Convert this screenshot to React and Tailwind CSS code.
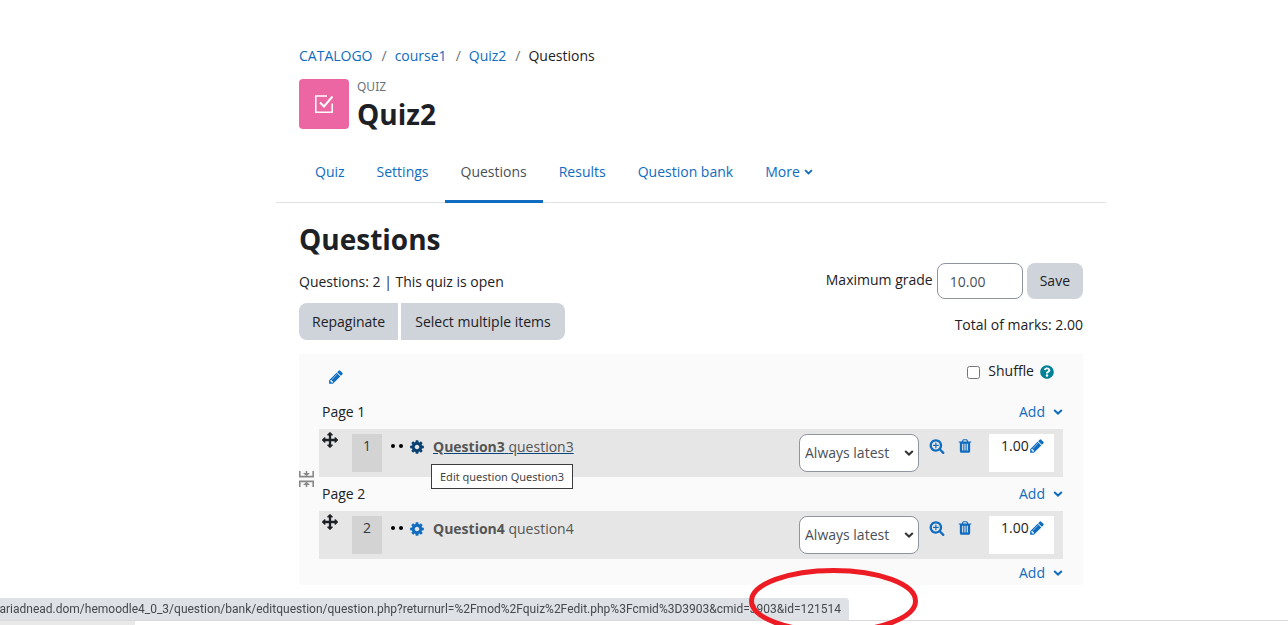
import { useState } from "react";
import { FaQuestionCircle } from "react-icons/fa";

const ICONS = {
  pencil:
    "M491 1536l91-91-235-235-91 91v107h128v128h107zm523-928q0-22-22-22-10 0-17 7l-542 542q-7 7-7 17 0 22 22 22 10 0 17-7l542-542q7-7 7-17zm-54-192l416 416-832 832h-416v-416zm683 96q0 53-37 90l-166 166-416-416 166-165q36-38 90-38 53 0 91 38l235 234q37 39 37 91z",
  cog: "M1152 896q0-106-75-181t-181-75-181 75-75 181 75 181 181 75 181-75 75-181zm512-109v222q0 12-8 23t-20 13l-185 28q-19 54-39 91 35 50 107 138 10 12 10 25t-9 23q-27 37-99 108t-94 71q-12 0-26-9l-138-108q-44 23-91 38-16 136-29 186-7 28-36 28h-222q-14 0-24.5-8.5t-11.5-21.5l-28-184q-49-16-90-37l-141 107q-10 9-25 9-14 0-25-11-126-114-165-168-7-10-7-23 0-12 8-23 15-21 51-66.5t54-70.5q-27-50-41-99l-183-27q-13-2-21-12.5t-8-23.5v-222q0-12 8-23t19-13l186-28q14-46 39-92-40-57-107-138-10-12-10-24 0-10 9-23 26-36 98.5-107.5t94.5-71.5q13 0 26 10l138 107q44-23 91-38 16-136 29-186 7-28 36-28h222q14 0 24.5 8.5t11.5 21.5l28 184q49 16 90 37l142-107q9-9 24-9 13 0 25 10 129 119 165 170 7 8 7 22 0 12-8 23-15 21-51 66.5t-54 70.5q26 50 41 98l183 28q13 2 21 12.5t8 23.5z",
  trash:
    "M704 1376v-704q0-14-9-23t-23-9h-64q-14 0-23 9t-9 23v704q0 14 9 23t23 9h64q14 0 23-9t9-23zm256 0v-704q0-14-9-23t-23-9h-64q-14 0-23 9t-9 23v704q0 14 9 23t23 9h64q14 0 23-9t9-23zm256 0v-704q0-14-9-23t-23-9h-64q-14 0-23 9t-9 23v704q0 14 9 23t23 9h64q14 0 23-9t9-23zm-544-992h448l-48-117q-7-9-17-11h-317q-10 2-17 11zm928 32v64q0 14-9 23t-23 9h-96v948q0 83-47 143.5t-113 60.5h-832q-66 0-113-58.5t-47-141.5v-952h-96q-14 0-23-9t-9-23v-64q0-14 9-23t23-9h309l70-167q15-37 54-63t79-26h320q40 0 79 26t54 63l70 167h309q14 0 23 9t9 23z",
  zoom: "M1088 800v64q0 13-9.5 22.5t-22.5 9.5h-224v224q0 13-9.5 22.5t-22.5 9.5h-64q-13 0-22.5-9.5t-9.5-22.5v-224h-224q-13 0-22.5-9.5t-9.5-22.5v-64q0-13 9.5-22.5t22.5-9.5h224v-224q0-13 9.5-22.5t22.5-9.5h64q13 0 22.5 9.5t9.5 22.5v224h224q13 0 22.5 9.5t9.5 22.5zm128 32q0-185-131.5-316.5t-316.5-131.5-316.5 131.5-131.5 316.5 131.5 316.5 316.5 131.5 316.5-131.5 131.5-316.5zm512 832q0 53-37.5 90.5t-90.5 37.5q-54 0-90-38l-343-342q-179 124-399 124-143 0-273.5-55.5t-225-150-150-225-55.5-273.5 55.5-273.5 150-225 225-150 273.5-55.5 273.5 55.5 225 150 150 225 55.5 273.5q0 220-124 399l343 343q37 37 37 90z",
  move: "M1792 896q0 26-19 45l-256 256q-19 19-45 19t-45-19-19-45v-128h-384v384h128q26 0 45 19t19 45-19 45l-256 256q-19 19-45 19t-45-19l-256-256q-19-19-19-45t19-45 45-19h128v-384h-384v128q0 26-19 45t-45 19-45-19l-256-256q-19-19-19-45t19-45l256-256q19-19 45-19t45 19 19 45v128h384v-384h-128q-26 0-45-19t-19-45 19-45l256-256q19-19 45-19t45 19l256 256q19 19 19 45t-19 45-45 19h-128v384h384v-128q0-26 19-45t45-19 45 19l256 256q19 19 19 45z",
};

function Icon({ name, className }) {
  return (
    <svg viewBox="0 0 1792 1792" fill="currentColor" className={className} aria-hidden="true">
      <path d={ICONS[name]} />
    </svg>
  );
}

function Chevron({ className }) {
  return (
    <svg viewBox="0 0 10 8" className={className} fill="none" stroke="currentColor" strokeWidth="2" aria-hidden="true">
      <path d="M1.2 2l3.8 3.6L8.8 2" />
    </svg>
  );
}

const crumbs = ["CATALOGO", "course1", "Quiz2"];
const tabs = ["Quiz", "Settings", "Questions", "Results", "Question bank"];
const questions = [
  { id: 1, name: "Question3", text: "question3", hovered: true },
  { id: 2, name: "Question4", text: "question4", hovered: false },
];

function AddMenu() {
  return (
    <button className="flex items-center gap-2 text-[#0f6cbf]">
      Add
      <Chevron className="w-[10px] h-2" />
    </button>
  );
}

function QuestionRow({ question }) {
  return (
    <div className="relative flex items-start bg-[#e6e6e6] pl-[3px] pr-[9px] py-[5px]">
      <button aria-label="Move" className="w-[30px] text-[#1d2125]">
        <Icon name="move" className="size-4 -mt-0.5" />
      </button>
      <span className="w-[30px] h-[38px] bg-[#d3d3d3] text-center text-[#343a40] leading-6">{question.id}</span>
      <svg viewBox="0 0 12 4" className="w-3 h-1 ml-[9px] mt-[10px]" aria-hidden="true">
        <circle cx="2" cy="2" r="2" />
        <circle cx="10" cy="2" r="2" />
      </svg>
      <a
        href="#question"
        className={
          question.hovered
            ? "flex items-center ml-[6px] mt-px leading-6 text-[#555] underline decoration-[#0a4780]"
            : "flex items-center ml-[6px] mt-px leading-6 text-[#555]"
        }
      >
        <Icon name="cog" className={question.hovered ? "size-4 text-[#094173]" : "size-4 text-[#0f6cbf]"} />
        <span className="ml-2 whitespace-pre">
          <b>{question.name}</b> {question.text}
        </span>
      </a>

      <div className="relative ml-auto w-[120px]">
        <select
          aria-label="Question version"
          className="appearance-none w-full h-[38px] bg-white border border-[#8f959e] rounded-lg pl-[5px] text-[#495057]"
        >
          <option>Always latest</option>
        </select>
        <Chevron className="absolute right-[5px] top-[15px] w-[10px] h-2 text-[#333] pointer-events-none" />
      </div>
      <button aria-label="Preview question" className="ml-[10px] mt-1 text-[#0f6cbf]">
        <Icon name="zoom" className="size-4" />
      </button>
      <button aria-label="Delete" className="ml-3 mt-1 text-[#0f6cbf]">
        <Icon name="trash" className="size-4" />
      </button>
      <div className="flex items-start w-[65px] h-[38px] ml-4 pl-3 bg-white leading-6">
        1.00
        <button aria-label="Edit maximum mark" className="mt-1 text-[#0f6cbf]">
          <Icon name="pencil" className="size-4" />
        </button>
      </div>

      {question.hovered && (
        <div
          role="tooltip"
          className="absolute left-28 top-[35px] z-10 h-[25px] px-2 bg-white border border-[#3c3c3c] font-['Noto_Sans',sans-serif] text-[11px] leading-[23px] text-[#444] whitespace-nowrap"
        >
          Edit question Question3
        </div>
      )}
    </div>
  );
}

export default function App() {
  const [grade, setGrade] = useState("10.00");
  const [shuffle, setShuffle] = useState(false);

  return (
    <div className="min-h-screen bg-white text-[#1d2125] text-[14px] leading-6 font-['Open_Sans','Noto_Sans',sans-serif]">
      <main className="pl-[276px] pr-[182px] pt-11">
        <header className="px-[23px]">
          <nav className="flex">
            {crumbs.map((crumb) => (
              <span key={crumb} className="flex">
                <a href="#crumb" className="text-[#0f6cbf]">{crumb}</a>
                <span className="pl-[9px] pr-2 text-[#6a737b]">/</span>
              </span>
            ))}
            <span>Questions</span>
          </nav>

          <div className="flex gap-2 mt-[11px]">
            <div className="flex items-center justify-center size-[50px] rounded bg-[#eb66a2]">
              <svg viewBox="0 0 18 18" className="size-[18px]" fill="none" stroke="white" strokeWidth="1.5" aria-hidden="true">
                <path d="M12 1H0.8v16.2h16.4V8.5" />
                <path d="M5 7.5l4 4L17.5 1.5" strokeWidth="2" />
              </svg>
            </div>
            <div>
              <div className="font-['Noto_Sans',sans-serif] text-[12px] leading-4 text-[#6a737b]">QUIZ</div>
              <h1 className="text-[28px] leading-[38px] font-bold">Quiz2</h1>
            </div>
          </div>
        </header>

        <nav className="flex px-[23px] mt-[11px] border-b border-[#dee2e6]">
          {tabs.map((tab) => (
            <a
              key={tab}
              href="#tab"
              className={
                tab === "Questions"
                  ? "px-4 pt-4 pb-4 -mb-px border-b-3 border-[#0f6cbf] text-[#495057]"
                  : "px-4 pt-4 text-[#0f6cbf]"
              }
            >
              {tab}
            </a>
          ))}
          <button className="flex items-center gap-1 self-start px-4 pt-4 text-[#0f6cbf]">
            More
            <Chevron className="w-[9px] h-2" />
          </button>
        </nav>

        <section className="px-[23px] pt-4">
          <h2 className="text-[28px] leading-10 font-bold">Questions</h2>

          <div className="flex justify-between mt-1">
            <div>
              <p className="pt-[7px]">Questions: 2 | This quiz is open</p>
              <div className="flex gap-[3px] mt-[9px]">
                <button className="h-[37px] px-[13px] bg-[#ced4da] rounded-l-lg">Repaginate</button>
                <button className="h-[37px] px-[14px] bg-[#ced4da] rounded-r-lg">Select multiple items</button>
              </div>
            </div>
            <div className="flex flex-col items-end">
              <form className="flex gap-1" onSubmit={(e) => e.preventDefault()}>
                <label htmlFor="maxgrade" className="pt-[5px]">Maximum grade</label>
                <input
                  id="maxgrade"
                  type="text"
                  value={grade}
                  onChange={(e) => setGrade(e.target.value)}
                  className="w-[86px] h-9 px-3 bg-white border border-[#8f959e] rounded-lg text-[#495057]"
                />
                <button className="h-9 px-[13px] bg-[#ced4da] rounded-lg">Save</button>
              </form>
              <p className="mt-[14px]">Total of marks: 2.00</p>
            </div>
          </div>

          <div className="relative mt-[14px] px-5 bg-[#fafafa]">
            <div className="flex items-start justify-between h-[41px] pl-[9px] pr-[9px] pt-[5px]">
              <button aria-label="Edit section heading" className="mt-[10px] text-[#0f6cbf]">
                <Icon name="pencil" className="size-4" />
              </button>
              <div className="flex items-center">
                <input
                  id="shuffle"
                  type="checkbox"
                  checked={shuffle}
                  onChange={(e) => setShuffle(e.target.checked)}
                  className="size-[13px] mt-0.5"
                />
                <label htmlFor="shuffle" className="ml-2">Shuffle</label>
                <button aria-label="Help with shuffle" className="ml-[6px] mt-0.5 text-[#008196]">
                  <FaQuestionCircle className="size-[14px]" />
                </button>
              </div>
            </div>

            {questions.map((question) => (
              <div key={question.id}>
                <div className="flex items-center justify-between h-[34px] pl-[3px]">
                  <span>Page {question.id}</span>
                  <AddMenu />
                </div>
                <QuestionRow question={question} />
              </div>
            ))}

            <div className="flex justify-end h-[26px] pt-0.5">
              <AddMenu />
            </div>

            {/* page break toggle between the two pages */}
            <button aria-label="Remove page break" className="absolute left-0 top-[117px] text-[#888]">
              <svg viewBox="0 0 16 16" className="size-4" fill="none" stroke="currentColor" strokeWidth="1.6">
                <path d="M0.8 0v5.6h13.4V0M0.8 16v-5.6h13.4V16" />
                <path d="M7.5 0v3M7.5 16v-3" />
                <path d="M4 2h7L7.5 5.2zM4 14h7l-3.5-3.2z" fill="currentColor" stroke="none" />
              </svg>
            </button>
          </div>
        </section>
      </main>

      {/* browser status bar */}
      <footer className="fixed inset-x-0 bottom-0">
        <div className="flex justify-end w-[849px] h-[22px] pr-2 overflow-hidden rounded-tr bg-[#dee1e6] font-[Roboto,sans-serif] text-[12px] leading-[22px] text-[#45494d] whitespace-nowrap">
          ariadnead.dom/hemoodle4_0_3/question/bank/editquestion/question.php?returnurl=%2Fmod%2Fquiz%2Fedit.php%3Fcmid%3D3903&amp;cmid=3903&amp;id=121514
        </div>
        <div className="h-[5px] border-t border-[#d9d9d9] bg-white">
          <div className="w-[135px] h-1 bg-[#e9e9e9]" />
        </div>
      </footer>

      <svg viewBox="0 0 170 57" className="fixed left-[749px] bottom-0 w-[170px] h-[57px] pointer-events-none" aria-hidden="true">
        <ellipse cx="84.5" cy="33" rx="82" ry="30.5" fill="none" stroke="#ed1c24" strokeWidth="5" />
      </svg>
    </div>
  );
}
